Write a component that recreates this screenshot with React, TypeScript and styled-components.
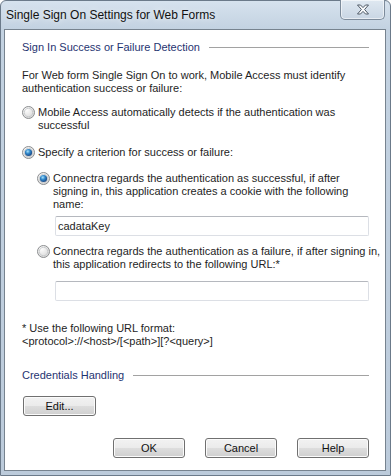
import styled, { createGlobalStyle } from 'styled-components'

const GlobalStyle = createGlobalStyle`
  body {
    margin: 0;
    background: #ffffff;
  }
`

const Window = styled.div`
  box-sizing: border-box;
  width: 391px;
  height: 476px;
  display: flex;
  flex-direction: column;
  border: 1px solid #6b7a8a;
  border-radius: 6px 6px 0 0;
  padding: 0 4px 4px 3px;
  background: linear-gradient(#d6e2ee, #c3d2e1 28px, #bccbdb);
  font-family: 'Liberation Sans', Arial, sans-serif;
`

const TitleBar = styled.div`
  height: 28px;
  display: flex;
  justify-content: space-between;
  align-items: flex-start;
  flex-shrink: 0;
`

const Title = styled.div`
  margin: 7px 0 0 2px;
  font-size: 12px;
  line-height: 15px;
  color: #111;
  text-shadow: 0 0 6px rgba(255, 255, 255, 0.9);
`

const CloseButton = styled.div`
  box-sizing: border-box;
  width: 45px;
  height: 20px;
  margin: -1px 1px 0 0;
  display: flex;
  align-items: center;
  justify-content: center;
  border: 1px solid #7d8b9b;
  border-top: none;
  border-radius: 0 0 5px 5px;
  background: linear-gradient(#dfe8f1, #c9d6e4);
  box-shadow: inset 0 0 0 1px rgba(255, 255, 255, 0.55);
`

const Content = styled.div`
  flex: 1;
  display: flex;
  flex-direction: column;
  border: 1px solid #77838f;
  background: #fff;
  padding: 11px 16px 0 17px;
  font-size: 11px;
  line-height: 13px;
  color: #1e1e1e;
`

const SectionHeader = styled.div<{ $top?: number }>`
  display: flex;
  align-items: center;
  margin-top: ${(p) => p.$top ?? 0}px;
  color: #1f3471;
  white-space: nowrap;

  &::after {
    content: '';
    flex: 1;
    height: 1px;
    margin-left: 9px;
    background: #a2a2a2;
  }
`

const Text = styled.div<{ $top?: number }>`
  margin-top: ${(p) => p.$top ?? 0}px;
  white-space: nowrap;
`

const RadioRow = styled.label<{ $top?: number }>`
  display: flex;
  align-items: flex-start;
  gap: 3px;
  margin-top: ${(p) => p.$top ?? 0}px;
  white-space: nowrap;
`

const SubGroup = styled.div`
  display: flex;
  flex-direction: column;
  padding-left: 15px;
`

const Field = styled.input<{ $top?: number }>`
  box-sizing: border-box;
  width: calc(100% - 18px);
  height: 20px;
  margin: ${(p) => p.$top ?? 0}px 0 0 18px;
  padding: 0 2px;
  border: 1px solid #dcdfe5;
  border-top-color: #b5b8be;
  border-radius: 2px;
  font-family: 'Liberation Sans', Arial, sans-serif;
  font-size: 11px;
  color: #1e1e1e;
  outline: none;
`

const Button = styled.button<{ $width?: number }>`
  box-sizing: border-box;
  width: ${(p) => p.$width ?? 72}px;
  height: 20px;
  padding: 0;
  border: 1px solid #707070;
  border-radius: 3px;
  background: linear-gradient(#f2f2f2 0%, #ebebeb 48%, #dddddd 52%, #cfcfcf 100%);
  box-shadow: inset 0 0 0 1px #fbfbfb;
  font-family: 'Liberation Sans', Arial, sans-serif;
  font-size: 11px;
  color: #111;
`

const EditRow = styled.div`
  margin-top: 14px;
  padding-left: 1px;
`

const Footer = styled.div`
  display: flex;
  justify-content: flex-end;
  gap: 20px;
  margin-top: 22px;
`

function Radio({ checked }: { checked?: boolean }) {
  const id = checked ? 'on' : 'off'
  return (
    <svg width="13" height="13" viewBox="0 0 13 13" style={{ flexShrink: 0 }}>
      <defs>
        <radialGradient id={`rf-${id}`} cx="0.35" cy="0.3" r="0.8">
          <stop offset="0" stopColor="#fdfdfd" />
          <stop offset="1" stopColor="#d4d4d4" />
        </radialGradient>
        <radialGradient id={`rd-${id}`} cx="0.4" cy="0.35" r="0.7">
          <stop offset="0" stopColor="#a6e1fb" />
          <stop offset="0.45" stopColor="#2f86c9" />
          <stop offset="1" stopColor="#173f7a" />
        </radialGradient>
      </defs>
      <circle cx="6.5" cy="6.5" r="6" fill={`url(#rf-${id})`} stroke="#8c8e90" strokeWidth="1" />
      <circle cx="6.5" cy="6.5" r="4.2" fill="none" stroke="#c2c4c6" strokeWidth="0.8" />
      {checked && <circle cx="6.5" cy="6.5" r="3.6" fill={`url(#rd-${id})`} />}
    </svg>
  )
}

export default function App() {
  return (
    <>
      <GlobalStyle />
      <Window>
        <TitleBar>
          <Title>Single Sign On Settings for Web Forms</Title>
          <CloseButton>
            <svg width="14" height="11" viewBox="0 0 14 11">
              <path
                d="M1.5 1 H4.5 L7 3.6 L9.5 1 H12.5 L8.6 5.5 L12.5 10 H9.5 L7 7.4 L4.5 10 H1.5 L5.4 5.5 Z"
                fill="#fafbfc"
                stroke="#4d5866"
                strokeWidth="1"
                strokeLinejoin="round"
              />
            </svg>
          </CloseButton>
        </TitleBar>
        <Content>
          <SectionHeader>Sign In Success or Failure Detection</SectionHeader>
          <Text $top={15}>
            For Web form Single Sign On to work, Mobile Access must identify
            <br />
            authentication success or failure:
          </Text>
          <RadioRow $top={11}>
            <Radio />
            <span>
              Mobile Access automatically detects if the authentication was
              <br />
              successful
            </span>
          </RadioRow>
          <RadioRow $top={14}>
            <Radio checked />
            <span>Specify a criterion for success or failure:</span>
          </RadioRow>
          <SubGroup>
            <RadioRow $top={13}>
              <Radio checked />
              <span>
                Connectra regards the authentication as successful, if after
                <br />
                signing in, this application creates a cookie with the following
                <br />
                name:
              </span>
            </RadioRow>
            <Field $top={5} defaultValue="cadataKey" readOnly />
            <RadioRow $top={9}>
              <Radio />
              <span>
                Connectra regards the authentication as a failure, if after signing in,
                <br />
                this application redirects to the following URL:*
              </span>
            </RadioRow>
            <Field $top={10} defaultValue="" readOnly />
          </SubGroup>
          <Text $top={21}>
            * Use the following URL format:
            <br />
            {'<protocol>://<host>/[<path>][?<query>]'}
          </Text>
          <SectionHeader $top={21}>Credentials Handling</SectionHeader>
          <EditRow>
            <Button $width={73}>Edit...</Button>
          </EditRow>
          <Footer>
            <Button>OK</Button>
            <Button>Cancel</Button>
            <Button>Help</Button>
          </Footer>
        </Content>
      </Window>
    </>
  )
}
